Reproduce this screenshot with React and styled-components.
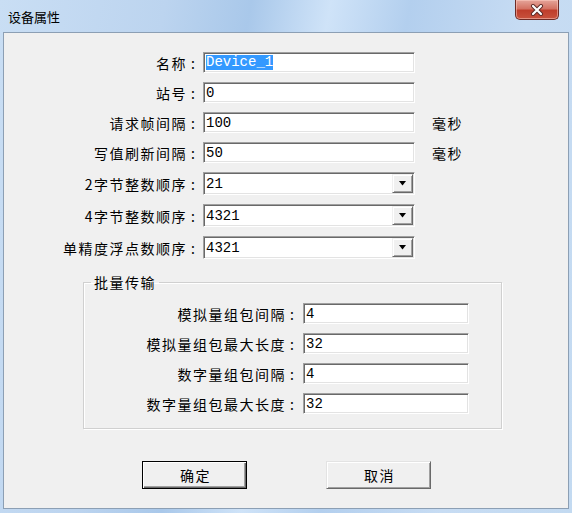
import React from 'react';
import styled, { createGlobalStyle } from 'styled-components';

const GlobalStyle = createGlobalStyle`
  html, body {
    margin: 0;
    padding: 0;
    background: #c4daf1;
  }
  * {
    box-sizing: border-box;
  }
`;

const cjk = `"Noto Sans CJK SC", "Noto Sans", sans-serif`;

const Window = styled.div`
  width: 572px;
  height: 513px;
  padding: 0 3px 4px 3px;
  display: flex;
  flex-direction: column;
  background: linear-gradient(
    100deg,
    #c9def4 0%,
    #bcd4ef 25%,
    #a9c8ea 38%,
    #cfe3f8 50%,
    #b3cfee 62%,
    #c7dcf3 80%,
    #c3daf1 100%
  );
  font-family: ${cjk};
`;

const TitleBar = styled.div`
  height: 32px;
  flex-shrink: 0;
  display: flex;
  align-items: flex-start;
  justify-content: space-between;
`;

const Title = styled.div`
  padding: 9px 0 0 5px;
  font-size: 13px;
  line-height: 16px;
  color: #000;
`;

const CloseButton = styled.div`
  width: 44px;
  height: 20px;
  margin-right: 10px;
  display: flex;
  align-items: center;
  justify-content: center;
  border: 1px solid #6d2b26;
  border-top: none;
  border-radius: 0 0 5px 5px;
  background: linear-gradient(#e5a59a 0%, #d47364 45%, #bf3e2c 55%, #c8523d 100%);
  box-shadow: inset 0 0 0 1px rgba(255, 210, 200, 0.5);
`;

const Client = styled.div`
  flex: 1;
  background: #f0f0f0;
  border: 1px solid #8c9fb4;
  display: flex;
  flex-direction: column;
`;

const Form = styled.div`
  margin-top: 19px;
  display: grid;
  grid-template-columns: 195px 212px auto;
  column-gap: 4px;
  row-gap: 9px;
  align-items: center;
`;

const Label = styled.div`
  text-align: right;
  font-size: 14px;
  letter-spacing: 1.5px;
  line-height: 16px;
  color: #000;
  white-space: nowrap;
`;

const Colon = styled.span`
  letter-spacing: 0;
  margin-left: 4px;
  padding-right: 4px;
`;

const Unit = styled.div`
  margin-left: 13px;
  font-size: 14px;
  letter-spacing: 1.5px;
  line-height: 16px;
  color: #000;
`;

const Field = styled.div`
  height: ${(p) => (p.$tall ? 23 : 21)}px;
  width: 100%;
  background: #fff;
  border-top: 1px solid #a0a0a0;
  border-left: 1px solid #a0a0a0;
  border-right: 1px solid #fff;
  border-bottom: 1px solid #fff;
  box-shadow: inset 1px 1px 0 #696969, inset -1px -1px 0 #e3e3e3;
  display: flex;
  align-items: center;
  padding-left: 2px;
  font-family: "Liberation Mono", monospace;
  font-size: 14px;
  color: #000;
`;

const Selected = styled.span`
  background: #3399ff;
  color: #fff;
  line-height: 15px;
`;

const ComboText = styled.span`
  flex: 1;
`;

const DropButton = styled.div`
  width: 21px;
  height: 19px;
  margin-right: 1px;
  background: #f0f0f0;
  border-top: 1px solid #f0f0f0;
  border-left: 1px solid #f0f0f0;
  border-right: 1px solid #696969;
  border-bottom: 1px solid #696969;
  box-shadow: inset 1px 1px 0 #fff, inset -1px -1px 0 #a0a0a0;
  display: flex;
  align-items: center;
  justify-content: center;
`;

const Group = styled.fieldset`
  margin: 15px 0 0 79px;
  width: 419px;
  padding: 0 0 14px 0;
  border: 1px solid #d0d0d0;
  box-shadow: 1px 1px 0 #fff, inset 1px 1px 0 #fff;
  display: grid;
  grid-template-columns: 214px 166px;
  column-gap: 5px;
  row-gap: 9px;
  align-items: center;
  min-width: 0;
`;

const Legend = styled.legend`
  margin-left: 7px;
  padding: 0 3px;
  font-size: 14px;
  letter-spacing: 1.5px;
  line-height: 16px;
  color: #000;
  margin-bottom: 13px;
`;

const ButtonRow = styled.div`
  margin: 32px 0 0 138px;
  display: flex;
  gap: 79px;
`;

const Button = styled.div`
  width: 105px;
  height: 28px;
  display: flex;
  align-items: center;
  justify-content: center;
  background: #f0f0f0;
  font-size: 14px;
  letter-spacing: 1.5px;
  padding-left: 2px;
  color: #000;
  border: 1px solid #000;
  box-shadow: inset 1px 1px 0 #fff, inset -1px -1px 0 #696969, inset -2px -2px 0 #a0a0a0;
  ${(p) =>
    !p.$default &&
    `border-color: #e3e3e3 #696969 #696969 #e3e3e3;
     box-shadow: inset 1px 1px 0 #fff, inset -1px -1px 0 #a0a0a0;`}
`;

const Arrow = () => (
  <svg width="9" height="5" viewBox="0 0 9 5">
    <path d="M1 0h7L4.5 4.5z" fill="#000" />
  </svg>
);

const CloseIcon = () => (
  <svg width="14" height="12" viewBox="0 0 14 12">
    <path d="M3 2l8 8M11 2l-8 8" stroke="#5a2a26" strokeWidth="4" strokeLinecap="round" />
    <path d="M3 2l8 8M11 2l-8 8" stroke="#fff" strokeWidth="2.2" strokeLinecap="round" />
  </svg>
);

const FieldLabel = ({ children }) => (
  <Label>
    {children}
    <Colon>:</Colon>
  </Label>
);

const Combo = ({ value }) => (
  <Field $tall>
    <ComboText>{value}</ComboText>
    <DropButton>
      <Arrow />
    </DropButton>
  </Field>
);

const groupRows = [
  ['模拟量组包间隔', '4'],
  ['模拟量组包最大长度', '32'],
  ['数字量组包间隔', '4'],
  ['数字量组包最大长度', '32'],
];

export default function App() {
  return (
    <>
      <GlobalStyle />
      <Window>
        <TitleBar>
          <Title>设备属性</Title>
          <CloseButton>
            <CloseIcon />
          </CloseButton>
        </TitleBar>
        <Client>
          <Form>
            <FieldLabel>名称</FieldLabel>
            <Field>
              <Selected>Device_1</Selected>
            </Field>
            <span />

            <FieldLabel>站号</FieldLabel>
            <Field>0</Field>
            <span />

            <FieldLabel>请求帧间隔</FieldLabel>
            <Field>100</Field>
            <Unit>毫秒</Unit>

            <FieldLabel>写值刷新间隔</FieldLabel>
            <Field>50</Field>
            <Unit>毫秒</Unit>

            <FieldLabel>2字节整数顺序</FieldLabel>
            <Combo value="21" />
            <span />

            <FieldLabel>4字节整数顺序</FieldLabel>
            <Combo value="4321" />
            <span />

            <FieldLabel>单精度浮点数顺序</FieldLabel>
            <Combo value="4321" />
            <span />
          </Form>

          <Group>
            <Legend>批量传输</Legend>
            {groupRows.map(([label, value]) => (
              <React.Fragment key={label}>
                <FieldLabel>{label}</FieldLabel>
                <Field>{value}</Field>
              </React.Fragment>
            ))}
          </Group>

          <ButtonRow>
            <Button $default>确定</Button>
            <Button>取消</Button>
          </ButtonRow>
        </Client>
      </Window>
    </>
  );
}
